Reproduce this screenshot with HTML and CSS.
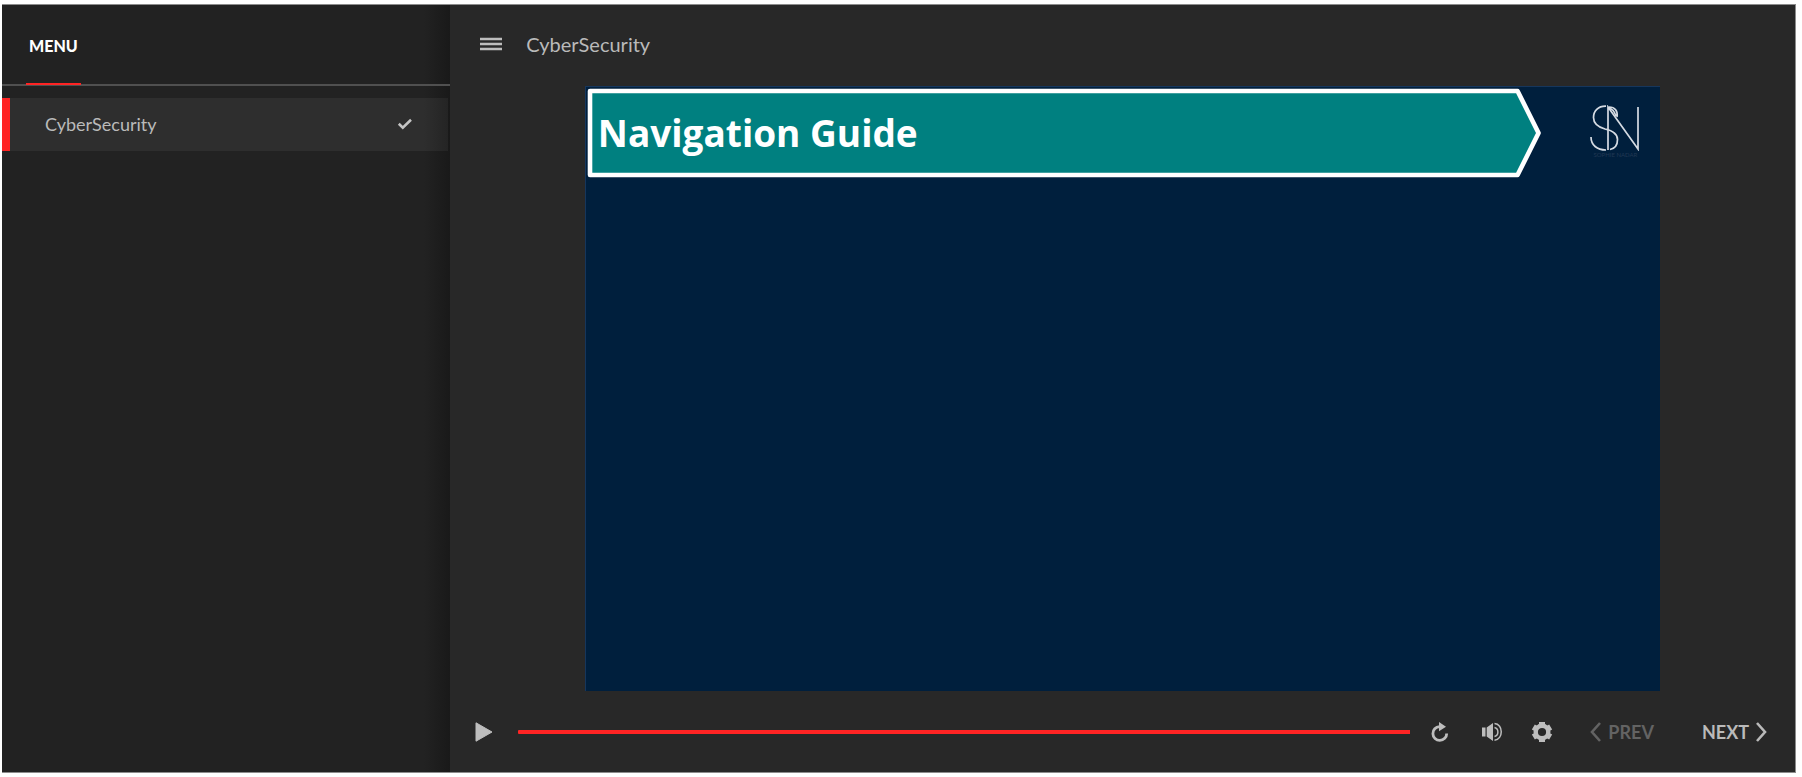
FILE: index.html
```html
<!DOCTYPE html>
<html lang="en">
<head>
<meta charset="utf-8">
<meta name="viewport" content="width=device-width, initial-scale=1">
<title>CyberSecurity</title>
<link rel="stylesheet" href="styles.css">
</head>
<body>
<div class="player">
  <aside class="sidebar">
    <div class="tabs"><button class="tab" type="button">MENU</button></div>
    <nav class="outline">
      <a class="outline-item" href="#slide">
        <span>CyberSecurity</span>
        <svg class="check" width="16" height="12" viewBox="0 0 16 12" aria-hidden="true"><path d="M1.8 5.8 5.8 9.6 14 1.8" fill="none" stroke="#c4c4c4" stroke-width="2.6"/></svg>
      </a>
    </nav>
  </aside>
  <main class="stage">
    <header class="topbar">
      <button class="icon-button" type="button" aria-label="Toggle menu">
        <svg width="22" height="14" viewBox="0 0 22 14"><path d="M0 2h22M0 7h22M0 12h22" stroke="#bdbdbd" stroke-width="2.6"/></svg>
      </button>
      <h1 class="course">CyberSecurity</h1>
    </header>
    <section class="slide" id="slide">
      <div class="banner">
        <svg class="banner-shape" viewBox="0 0 954 90" preserveAspectRatio="none" aria-hidden="true"><path d="M3 3H930L951 45 930 87H3Z" fill="#008080" stroke="#fff" stroke-width="4.600" stroke-linejoin="round"/></svg>
        <h2 class="banner-title">Navigation Guide</h2>
      </div>
      <div class="logo">
        <svg width="52" height="46" viewBox="0 0 52 46" aria-hidden="true"><g fill="none" stroke="#d5dbe3" stroke-width="1.700"><path d="M17 1.200C9 1 4.500 6 4.500 12.500 4.500 19 9 22 16 24 23 25.500 28.500 28 28.500 34.500 28.500 40 26 43.500 21 44.500"/><path d="M17 45C8 45 2 40 2 32"/><path d="M19 45V2L49 44V2"/><path d="M20 2C26 2 29 6 28 12M19 3C24 4 25 6 27 11"/></g></svg>
        <span class="logo-name">SOPHIE NADAR</span>
      </div>
    </section>
    <footer class="controls">
      <button class="icon-button" type="button" aria-label="Play">
        <svg width="18" height="20" viewBox="0 0 18 20"><path d="M1 .8 17 10 1 19.200Z" fill="#bdbdbd" stroke="#bdbdbd" stroke-linejoin="round"/></svg>
      </button>
      <input class="seek" type="range" min="0" max="100" value="100" aria-label="Slide progress">
      <button class="icon-button replay" type="button" aria-label="Replay">
        <svg width="18" height="20" viewBox="0 0 18 20"><path d="M8.500 4.600A6.900 6.900 0 1 0 15.700 11.500" fill="none" stroke="#bdbdbd" stroke-width="2.800"/><path d="M8 0 15 4.800 8 9.200Z" fill="#bdbdbd"/></svg>
      </button>
      <button class="icon-button" type="button" aria-label="Volume">
        <svg width="22" height="20" viewBox="0 0 22 20"><path d="M1 5.500H4.500V14.500H1ZM5.700 5.500 12 1V19L5.700 14.500Z" fill="#bdbdbd"/><path d="M13.500 1.500C22.500 2 22.500 17.500 13.500 18.200M13.500 5.500C18 6.500 18 13.500 13.500 14.500" fill="none" stroke="#bdbdbd" stroke-width="1.500"/></svg>
      </button>
      <button class="icon-button settings" type="button" aria-label="Settings">
        <svg width="22" height="20" viewBox="0 0 22 20"><circle cx="11" cy="10" r="6.300" fill="none" stroke="#bdbdbd" stroke-width="4.400"/><g stroke="#bdbdbd" stroke-width="6"><path d="M11 0V4M11 16V20"/><path d="M11 0V4M11 16V20" transform="rotate(60 11 10)"/><path d="M11 0V4M11 16V20" transform="rotate(120 11 10)"/></g></svg>
      </button>
      <button class="step prev" type="button" disabled>
        <svg width="11" height="20" viewBox="0 0 11 20" aria-hidden="true"><path d="M10 1 2 10 10 19" fill="none" stroke="currentColor" stroke-width="2.600"/></svg>
        <span>PREV</span>
      </button>
      <button class="step" type="button">
        <span>NEXT</span>
        <svg width="11" height="20" viewBox="0 0 11 20" aria-hidden="true"><path d="M1 1 9 10 1 19" fill="none" stroke="currentColor" stroke-width="2.600"/></svg>
      </button>
    </footer>
  </main>
</div>
</body>
</html>
```
FILE: styles.css
```css
* { box-sizing: border-box; }

body {
  margin: 0;
  padding: 4px 6px 4px 2px;
  height: 100vh;
  background: #fff;
  font-family: Lato, "Liberation Sans", sans-serif;
  color: #bababa;
}

button {
  padding: 0;
  border: 0;
  background: none;
  color: inherit;
  font: inherit;
  cursor: pointer;
}

svg { display: block; flex: none; }

.player {
  display: grid;
  grid-template-columns: 25% 1fr;
  height: 100%;
  border: solid #8c8c8c;
  border-width: 1px 1px 1px 0;
  background: #282828;
}

.sidebar {
  background: linear-gradient(to left, #191919, #222222 26px);
}

.tabs {
  display: flex;
  height: 81px;
  padding-left: 24px;
  border-bottom: 2px solid #505050;
}

.tab {
  height: 80px;
  padding: 2px 3px 0;
  border-bottom: 2px solid #ff2424;
  color: #fff;
  font-size: 16px;
  font-weight: 900;
}

.outline { padding: 12px 2px 0 0; }

.outline-item {
  display: flex;
  align-items: center;
  justify-content: space-between;
  height: 53px;
  padding: 0 35px 2px;
  border-left: 8px solid #ff2424;
  background: linear-gradient(to left, #242424, #2e2e2e 24px);
  color: #bababa;
  font-size: 18px;
  text-decoration: none;
}

.stage {
  display: grid;
  grid-template-rows: 81px 1fr 81px;
  min-width: 0;
}

.topbar {
  display: flex;
  align-items: center;
  gap: 24px;
  padding: 0 30px 4px;
}

.course {
  margin: 0;
  font-size: 20px;
  font-weight: 400;
}

.slide {
  display: flex;
  align-items: flex-start;
  justify-content: space-between;
  justify-self: center;
  height: 100%;
  aspect-ratio: 16 / 9;
  padding: 1px 19px 0 1px;
  border: solid #16365c;
  border-width: 1px 0 0 1px;
  background: #001f3d;
}

.banner {
  display: grid;
  align-items: center;
  flex: 1;
  margin-right: 48px;
  height: 90px;
}

.banner-shape {
  grid-area: 1 / 1;
  width: 100%;
  height: 90px;
}

.banner-title {
  z-index: 1;
  grid-area: 1 / 1;
  margin: 0;
  padding-left: 11px;
  color: #fff;
  font: 700 37px/48px "Open Sans", sans-serif;
}

.logo {
  display: flex;
  flex-direction: column;
  align-items: center;
  width: 52px;
  padding-top: 17px;
}

.logo-name {
  color: #203853;
  font-size: 6px;
  line-height: 8px;
  white-space: nowrap;
}

.controls {
  display: flex;
  align-items: center;
  padding: 0 28px 0 25px;
}

.seek {
  flex: 1;
  min-width: 0;
  height: 4px;
  margin: 0 21px 0 25px;
  border-radius: 1px;
  background: #ff2424;
  appearance: none;
}

.seek::-webkit-slider-thumb {
  width: 4px;
  height: 4px;
  background: #ff2424;
  appearance: none;
}

.replay { margin-right: 32px; }

.settings { margin: 0 37px 0 28px; }

.step {
  display: flex;
  align-items: center;
  gap: 7px;
  font-size: 18px;
  font-weight: 700;
}

.prev {
  margin-right: 48px;
  color: #636363;
}
```
